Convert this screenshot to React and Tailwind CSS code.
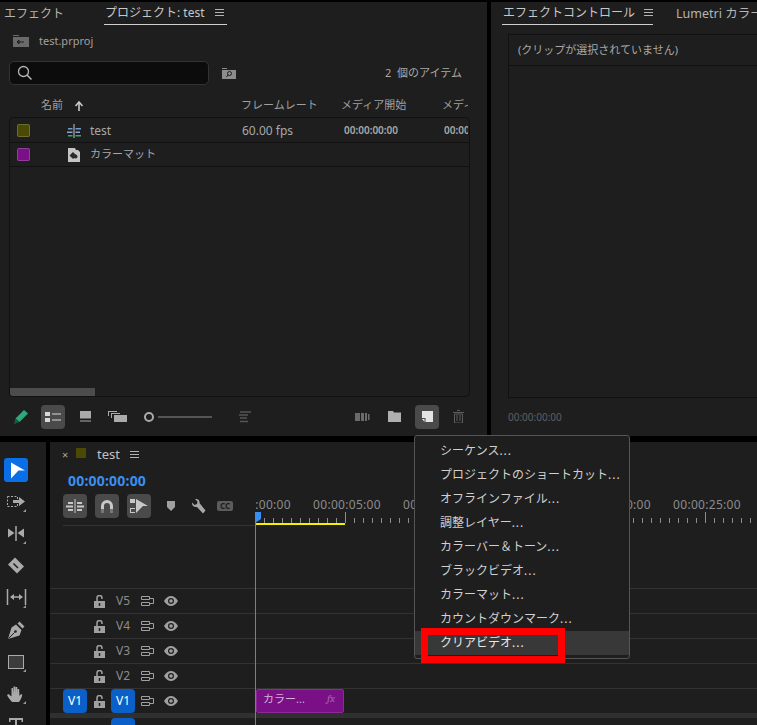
import React from "react"

const menuItems = [
  "シーケンス",
  "プロジェクトのショートカット",
  "オフラインファイル",
  "調整レイヤー",
  "カラーバー＆トーン",
  "ブラックビデオ",
  "カラーマット",
  "カウントダウンマーク",
  "クリアビデオ",
]

const tracks = ["V5", "V4", "V3", "V2"]
const rulerLabels = ["00:00:00:00", "00:00:05:00", "00:00:10:00", "00:00:15:00", "00:00:20:00", "00:00:25:00", "00:00:30:00"]

function Burger({ className = "" }) {
  return (
    <svg width="9" height="8" viewBox="0 0 9 8" className={"flex-none " + className}>
      <path d="M0 .5h9M0 3.5h9M0 6.500h9" stroke="#b4b4b4" strokeWidth="1" />
    </svg>
  )
}

function Corner() {
  return <path d="M22 19v3h-3z" fill="#9a9a9a" />
}

function ToolIcon({ children, active }) {
  return (
    <div className={"w-[24px] h-[24px] rounded-[3px] flex-none " + (active ? "bg-[#0a6fe6]" : "")}>
      <svg width="24" height="24" viewBox="0 0 24 24">{children}</svg>
    </div>
  )
}

function Tools() {
  return (
    <div className="w-[46px] flex-none bg-[#1e1e1e] pt-[16px] pl-[4px] flex flex-col gap-[8px]">
      <ToolIcon active>
        <path d="M7 4.500 21 12.500h-6.500L7 20.500z" fill="#fff" />
      </ToolIcon>
      <ToolIcon>
        <path d="M3.500 6.500h10v10h-10z" fill="none" stroke="#aaa" strokeDasharray="2 1.500" />
        <path d="M9 10h6V7l6 4.500-6 4.500v-3H9z" fill="#aaa" />
        <Corner />
      </ToolIcon>
      <ToolIcon>
        <path d="M12 4v15" stroke="#aaa" strokeWidth="1.500" />
        <path d="M10.500 11 4 6.500v9zM13.500 11l6.500-4.500v9z" fill="#aaa" />
        <Corner />
      </ToolIcon>
      <ToolIcon>
        <path d="m11 3.500 9 9-7 7-9-9z" fill="#aaa" />
        <path d="m9.500 9.500 4.500 4.500" stroke="#1e1e1e" strokeWidth="1.500" />
      </ToolIcon>
      <ToolIcon>
        <path d="M3.500 3v16M21.500 3v16" stroke="#aaa" strokeWidth="1.500" />
        <path d="M7 11h11" stroke="#aaa" strokeWidth="1.500" />
        <path d="m6 11 4-3v6zM19 11l-4-3v6z" fill="#aaa" />
        <Corner />
      </ToolIcon>
      <ToolIcon>
        <path d="m15.500 3.500 5 5-2 2-5-5zM12 6.500l5.500 5.500-2 5.500L4 21l3.500-11.500z" fill="#aaa" />
        <path d="m4.500 20.500 6-6" stroke="#1e1e1e" />
        <circle cx="11.500" cy="13.500" r="1.300" fill="#1e1e1e" />
      </ToolIcon>
      <ToolIcon>
        <rect x="4.500" y="5.500" width="15" height="13" fill="#3c3c3c" stroke="#aaa" />
        <Corner />
      </ToolIcon>
      <ToolIcon>
        <path d="M8 20c-2-2-4-5-5-7l1.500-1 3 2.500V6h1.500l.5 6V4.500h1.700l.3 7.500V5h1.700l.3 7V7h1.600l.4 7 1.500-2 1.300.8c-.6 2.700-1.500 5.200-3.300 7.200z" fill="#aaa" />
        <Corner />
      </ToolIcon>
      <ToolIcon>
        <path d="M5 4h14v4h-1.500V6H13v14h-2V6H6.500v2H5z" fill="#aaa" />
      </ToolIcon>
    </div>
  )
}

function SequenceIcon() {
  return (
    <svg width="14" height="14" viewBox="0 0 14 14">
      <path d="M6.500 0h1v14h-1z" fill="#c8c8c8" />
      <path d="M1 4h4.500v1.500H1z" fill="#6f9bd1" />
      <path d="M8.500 4H14v1.500H8.500z" fill="#6f9bd1" />
      <path d="M0 7.500h5.500V9H0zM8.500 7.500H13V9H8.500z" fill="#8aa8c8" />
      <path d="M1 11h4.500v1.500H1zM8.500 11H14v1.500H8.500z" fill="#1fb573" />
    </svg>
  )
}

function MatteIcon() {
  return (
    <svg width="13" height="15" viewBox="0 0 13 15">
      <path d="M0 1h7l1 2h2l2 2v10H0z" fill="#c4c4c4" />
      <path d="M8 0v3h3z" fill="#1e1e1e" />
      <path d="m5 5 3.500 3.500L5 12 1.500 8.500z" fill="#2a2a2a" />
      <circle cx="7.500" cy="9.500" r="2" fill="#2a2a2a" />
    </svg>
  )
}

function ListRow({ color, icon, name, kana, fps, start }) {
  return (
    <div className="h-[24px] flex-none flex items-center border-b border-[#111] relative">
      <span className="w-[13px] h-[13px] ml-[7px] rounded-[2px] border border-[#ffffff30] flex-none" style={{ backgroundColor: color }} />
      <span className="w-[16px] ml-[36px] flex-none flex justify-center">{icon}</span>
      <span className={"ml-[8px] w-[152px] flex-none text-[#a8a8a8] " + (kana ? "text-[11px]" : "text-[12px]")}>{name}</span>
      <span className="w-[102px] flex-none text-[12px] text-[#a8a8a8]">{fps}</span>
      {start && <span className="w-[100px] flex-none text-[10px] font-semibold text-[#a8a8a8]">{start}</span>}
      {start && <span className="w-[24px] flex-none overflow-hidden text-[10px] font-semibold text-[#a8a8a8] whitespace-nowrap">{start}</span>}
    </div>
  )
}

function ProjectPanel() {
  return (
    <div className="w-[487px] flex-none bg-[#1e1e1e] flex flex-col">
      <div className="h-[24px] flex-none flex items-start text-[12px] text-[#b4b4b4] leading-[24px] whitespace-nowrap">
        <span className="ml-[4px] w-[100px]">エフェクト</span>
        <span className="w-[123px] h-[23px] border-b border-[#d0d0d0] flex items-center gap-[10px]">
          <span className="text-[#c8c8c8] ml-[1px]">プロジェクト: test</span>
          <Burger />
        </span>
      </div>
      <div className="h-[30px] flex-none flex items-center pl-[13px] gap-[10px] text-[11px] text-[#a0a0a0]">
        <svg width="16" height="12" viewBox="0 0 16 12">
          <path d="M0 0h6v1H0zM0 2h16v10H0z" fill="#6a6a6a" />
          <path d="M4 7h7M6 5 4 7l2 2M6 5v4" stroke="#1e1e1e" fill="none" />
        </svg>
        <span>test.prproj</span>
      </div>
      <div className="mt-[5px] h-[24px] flex-none flex items-center">
        <div className="ml-[9px] w-[200px] h-[24px] bg-[#0c0c0c] border border-[#333] rounded-[5px] flex items-center pl-[7px]">
          <svg width="16" height="16" viewBox="0 0 16 16">
            <circle cx="6.500" cy="6.500" r="5" fill="none" stroke="#b4b4b4" strokeWidth="1.300" />
            <path d="m10 10 4.500 4.500" stroke="#b4b4b4" strokeWidth="1.500" />
          </svg>
        </div>
        <svg width="14" height="11" viewBox="0 0 14 11" className="ml-[13px]">
          <path d="M0 0h5v1H0zM0 2h14v9H0z" fill="#8c8c8c" />
          <circle cx="7.500" cy="5.500" r="2" fill="none" stroke="#1e1e1e" />
          <path d="M6 7 4.500 9" stroke="#1e1e1e" />
        </svg>
        <span className="ml-auto mr-[25px] text-[11px] text-[#a8a8a8]">2 <span className="ml-[3px]">個のアイテム</span></span>
      </div>
      <div className="pt-[9px] h-[32px] flex-none flex items-center text-[11px] text-[#a0a0a0] whitespace-nowrap">
        <span className="ml-[41px] w-[33px]">名前</span>
        <svg width="10" height="10" viewBox="0 0 10 10" className="w-[10px] flex-none">
          <path d="M5 10V2M1.500 5 5 1l3.500 4" fill="none" stroke="#c8c8c8" strokeWidth="1.600" />
        </svg>
        <span className="ml-[157px] w-[100px] flex-none">フレームレート</span>
        <span className="w-[101px] flex-none">メディア開始</span>
        <span className="w-[26px] flex-none overflow-hidden">メディア</span>
      </div>
      <div className="mx-[9px] w-[461px] h-[280px] flex-none border border-[#111] rounded-[4px] pt-[1px] flex flex-col">
        <ListRow color="#4a4a05" icon={<SequenceIcon />} name="test" fps="60.00 fps" start="00:00:00:00" />
        <ListRow color="#7a1085" icon={<MatteIcon />} name="カラーマット" kana />
        <div className="mt-auto h-[8px] w-[85px] bg-[#4c4c4c] rounded-bl-[3px]" />
      </div>
      <div className="flex-1 flex items-center">
        <svg width="16" height="16" viewBox="0 0 16 16" className="ml-[13px]">
          <path d="m11 1 4 3.500-8.500 8.500-4-3.500z" fill="#2fa87a" />
          <path d="m2.500 9.500 4 3.500L1 15z" fill="#1c5c44" />
        </svg>
        <div className="ml-[12px] w-[24px] h-[24px] bg-[#4a4a4a] rounded-[4px] flex items-center justify-center">
          <svg width="16" height="10" viewBox="0 0 16 10">
            <path d="M0 0h5v4H0zM0 6h5v4H0z" fill="#d8d8d8" />
            <path d="M7 2h9M7 8h9" stroke="#d8d8d8" />
          </svg>
        </div>
        <svg width="11" height="11" viewBox="0 0 11 11" className="ml-[15px]">
          <path d="M0 0h11v7.500H0z" fill="#aaa" />
          <path d="M0 10h11" stroke="#aaa" />
        </svg>
        <svg width="19" height="11" viewBox="0 0 19 11" className="ml-[17px]">
          <path d="M0 0h9v1H1v4H0zM3 2h9v1H4v4H3z" fill="#aaa" />
          <path d="M6 4h13v7H6z" fill="#aaa" />
        </svg>
        <span className="ml-[17px] w-[10px] h-[10px] rounded-full border-2 border-[#aaa] flex-none" />
        <span className="ml-[4px] w-[54px] h-[2px] bg-[#555] flex-none" />
        <svg width="12" height="12" viewBox="0 0 12 12" className="ml-[27px]">
          <path d="M1 1h11M0 4h9M1 7h7M1 10.500h8" stroke="#555" strokeWidth="1.500" />
        </svg>
        <svg width="15" height="9" viewBox="0 0 15 9" className="ml-[104px]">
          <path d="M0 1h5v8H0zM6 1h3v8H6zM10 1h2v8h-2zM13 2h1.500v6H13z" fill="#6a6a6a" />
        </svg>
        <svg width="13" height="11" viewBox="0 0 13 11" className="ml-[18px]">
          <path d="M0 0h5l1 1.500h7V11H0z" fill="#b0b0b0" />
        </svg>
        <div className="ml-[14px] w-[24px] h-[24px] bg-[#4a4a4a] rounded-[4px] flex items-center justify-center">
          <svg width="11" height="11" viewBox="0 0 11 11">
            <path d="M0 0h11v11H3.500V7H0z" fill="#e4e4e4" />
            <path d="M0 8h2.500v3z" fill="#e4e4e4" />
          </svg>
        </div>
        <svg width="11" height="13" viewBox="0 0 11 13" className="ml-[14px]">
          <path d="M4 .5h3M0 2.500h11" stroke="#5c5c5c" />
          <path d="M1.500 4h8v9h-8z" fill="none" stroke="#5c5c5c" />
          <path d="M4 5v6M7 5v6" stroke="#5c5c5c" />
        </svg>
      </div>
    </div>
  )
}

function EffectPanel() {
  return (
    <div className="flex-1 min-w-0 bg-[#1e1e1e] flex flex-col overflow-hidden">
      <div className="h-[24px] flex-none flex items-start text-[12px] text-[#b4b4b4] leading-[24px] whitespace-nowrap">
        <span className="ml-[11px] w-[151px] h-[23px] border-b border-[#d0d0d0] flex items-center gap-[9px] flex-none">
          <span className="text-[#c8c8c8] ml-[1px]">エフェクトコントロール</span>
          <Burger />
        </span>
        <span className="ml-[23px] text-[12.500px]">Lumetri カラー</span>
      </div>
      <div className="ml-[17px] mt-[8px] h-[364px] flex-none border border-[#111] border-r-0 flex flex-col">
        <div className="h-[31px] flex-none border-b border-[#111] flex items-center pl-[9px] text-[11px] text-[#a8a8a8]">
          (クリップが選択されていません)
        </div>
      </div>
      <div className="flex-1 flex items-center pl-[17px] text-[10px] text-[#5e5e5e]">00:00:00:00</div>
    </div>
  )
}

function Ruler() {
  return (
    <div className="flex-1 min-w-0 overflow-hidden flex flex-col">
      <div className="h-[18px] flex-none pt-[2px] -ml-[43px] flex text-[12px] leading-[18px] text-[#8c8c8c] tracking-[0.3px] whitespace-nowrap">
        {rulerLabels.map((label) => (
          <span key={label} className="w-[90px] flex-none text-center">{label}</span>
        ))}
      </div>
      <svg width="502" height="14" viewBox="0 0 502 14" className="flex-none">
        {Array.from({ length: 56 }, (_, i) => (
          <path key={i} d={i % 10 === 0 ? "M" + (i * 9 + 0.5) + " 0v11" : "M" + (i * 9 + 0.5) + " 6v5"} stroke="#8c8c8c" />
        ))}
        <path d="M1 11h89v2H1z" fill="#f5ef00" />
      </svg>
    </div>
  )
}

function TimelineButton({ children }) {
  return (
    <div className="w-[24px] h-[24px] bg-[#4a4a4a] rounded-[4px] flex items-center justify-center flex-none">{children}</div>
  )
}

function LockIcon() {
  return (
    <svg width="11" height="13" viewBox="0 0 11 13">
      <path d="M3 6V3a2.500 2.500 0 0 1 5 0v1" fill="none" stroke="#a0a0a0" strokeWidth="1.500" />
      <path d="M0 6h11v7H0z" fill="#a0a0a0" />
      <path d="M5.500 8v3" stroke="#1e1e1e" strokeWidth="1.500" />
    </svg>
  )
}

function SyncIcon() {
  return (
    <svg width="13" height="10" viewBox="0 0 13 10">
      <path d="M.5.500h8v3h-8zM.5 6.500h8v3h-8zM8.500 2.500h4v5h-4" fill="none" stroke="#a0a0a0" />
    </svg>
  )
}

function EyeIcon() {
  return (
    <svg width="14" height="10" viewBox="0 0 14 10">
      <path d="M0 5c2-3.500 4.500-5 7-5s5 1.500 7 5c-2 3.500-4.500 5-7 5S2 8.500 0 5z" fill="#a0a0a0" />
      <circle cx="7" cy="5" r="3" fill="#1e1e1e" />
      <circle cx="7" cy="5" r="1.800" fill="#a0a0a0" />
    </svg>
  )
}

function TrackHeader({ name, active }) {
  return (
    <div className="w-[205px] flex-none flex items-center pl-[13px] text-[12px]">
      <span className={"w-[24px] h-[24px] rounded-[4px] flex-none flex items-center justify-center text-white " + (active ? "bg-[#0a5fc8]" : "")}>
        {active ? "V1" : ""}
      </span>
      <span className="ml-[7px] w-[11px] flex-none flex"><LockIcon /></span>
      <span className={"ml-[6px] w-[24px] h-[24px] rounded-[4px] flex-none flex items-center justify-center " + (active ? "bg-[#0a5fc8] text-white" : "text-[#8c8c8c]")}>
        {name}
      </span>
      <span className="ml-[6px] w-[13px] flex-none flex"><SyncIcon /></span>
      <span className="ml-[10px] w-[14px] flex-none flex"><EyeIcon /></span>
    </div>
  )
}

function Timeline() {
  return (
    <div className="flex-1 min-w-0 bg-[#1e1e1e] flex flex-col relative overflow-hidden">
      <div className="h-[25px] flex-none flex items-center text-[13px] text-[#c0c0c0]">
        <span className="ml-[12px] w-[6px] text-[11px] leading-none text-[#aaa] flex-none">×</span>
        <span className="ml-[8px] w-[10px] h-[10px] bg-[#4a4a05] flex-none -mt-[3px]" />
        <span className="ml-[11px]">test</span>
        <Burger className="ml-[10px]" />
      </div>
      <div className="h-[26px] flex-none flex items-center pl-[18px] text-[14px] font-bold text-[#3a8ef0] tracking-[0.2px]">00:00:00:00</div>
      <div className="h-[33px] flex-none flex pt-[1px]">
        <div className="w-[205px] flex-none flex flex-col">
          <div className="h-[24px] flex-none flex items-center pl-[13px]">
            <TimelineButton>
              <svg width="18" height="14" viewBox="0 0 18 14">
                <path d="M8.500 0h1v14h-1z" fill="#c8c8c8" />
                <path d="M2 3h5v2H2zM0 6.500h7v2H0zM2 10h5v2H2zM11 3h5v2h-5zM11 6.500h7v2h-7zM11 10h5v2h-5z" fill="#c8c8c8" />
              </svg>
            </TimelineButton>
            <span className="ml-[8px]">
              <TimelineButton>
                <svg width="12" height="13" viewBox="0 0 12 13">
                  <path d="M1.500 12V6a4.500 4.500 0 0 1 9 0v6" fill="none" stroke="#c8c8c8" strokeWidth="3" />
                  <path d="M0 9h3v4H0zM9 9h3v4H9z" fill="#777" />
                </svg>
              </TimelineButton>
            </span>
            <span className="ml-[8px]">
              <TimelineButton>
                <svg width="18" height="16" viewBox="0 0 18 16">
                  <path d="M6 1 18 8h-5l-7 7z" fill="#c8c8c8" />
                  <path d="M0 1h5v4H0zM0 10h5v1H1v3h4v1H0z" fill="#c8c8c8" />
                </svg>
              </TimelineButton>
            </span>
            <svg width="10" height="10" viewBox="0 0 10 10" className="ml-[15px]">
              <path d="M1 0h8v6L5 10 1 6z" fill="#a0a0a0" />
            </svg>
            <svg width="15" height="15" viewBox="0 0 15 15" className="ml-[15px]">
              <path d="M1 3.500 3.500 6 6 5l.5-2.500L4 0c2.500-.5 5 1 4.500 4l6 7.500-2.500 3L6 8C3 8.500.500 6.500 1 3.500z" fill="#a8a8a8" />
            </svg>
            <div className="ml-[11px] w-[16px] h-[10px] bg-[#5c5c5c] rounded-[2px] flex items-center justify-center text-[8px] font-bold leading-none text-[#1e1e1e]">CC</div>
          </div>
          <div className="mt-[7px] ml-[13px] h-[1px] bg-[#333]" />
        </div>
        <Ruler />
      </div>
      <div className="h-[62px] flex-none" />
      {tracks.map((name) => (
        <div key={name} className="h-[25px] flex-none border-t border-[#333] flex">
          <TrackHeader name={name} />
        </div>
      ))}
      <div className="h-[25px] flex-none border-t border-[#333] flex">
        <TrackHeader name="V1" active />
        <div className="w-[88px] ml-[1px] h-[24px] bg-[#7a1085] border border-[#8d2a98] rounded-[2px] flex items-start pl-[6px] text-[11px] leading-[17px] text-[#d2b4d6]">
          <span>カラー...</span>
          <span className="ml-auto mr-[8px] italic font-serif text-[#a565ae]">fx</span>
        </div>
      </div>
      <div className="h-[5px] flex-none bg-[#303030]" />
      <div className="flex-1 flex items-start pl-[61px]">
        <span className="w-[24px] h-[24px] rounded-[4px] bg-[#0a5fc8] flex-none" />
      </div>
      <div className="absolute left-[205px] top-[75px] bottom-0 w-[1px] bg-[#4d8ac7]" />
      <svg width="6" height="11" viewBox="0 0 6 11" className="absolute left-[205px] top-[70px]">
        <path d="M0 0h6v7l-6 4z" fill="#3a8ef0" />
      </svg>
    </div>
  )
}

function NewItemMenu() {
  return (
    <div className="absolute left-[414px] top-[435px] w-[216px] h-[224px] bg-[#1e1e1e] border border-[#555] rounded-[3px] pt-[3px] flex flex-col text-[12px] text-[#d0d0d0] whitespace-nowrap">
      {menuItems.map((item, i) => (
        <div key={item} className={"h-[24px] flex-none flex items-center pl-[25px] " + (i === 8 ? "bg-[#383838] text-[#e8e8e8]" : "")}>
          <span>{item}<span className="tracking-[1px]">...</span></span>
        </div>
      ))}
      <div className="absolute left-[6px] top-[192px] w-[144px] h-[35px] border-[7px] border-[#ff0000]" />
    </div>
  )
}

export default function App() {
  return (
    <div className="relative w-[757px] h-[725px] overflow-hidden bg-black pt-[2px] flex flex-col [font-family:'Noto_Sans','Noto_Sans_CJK_JP',sans-serif]">
      <div className="h-[434px] flex-none flex gap-[4px]">
        <ProjectPanel />
        <EffectPanel />
      </div>
      <div className="mt-[6px] flex-1 min-h-0 flex gap-[4px]">
        <Tools />
        <Timeline />
      </div>
      <NewItemMenu />
    </div>
  )
}
